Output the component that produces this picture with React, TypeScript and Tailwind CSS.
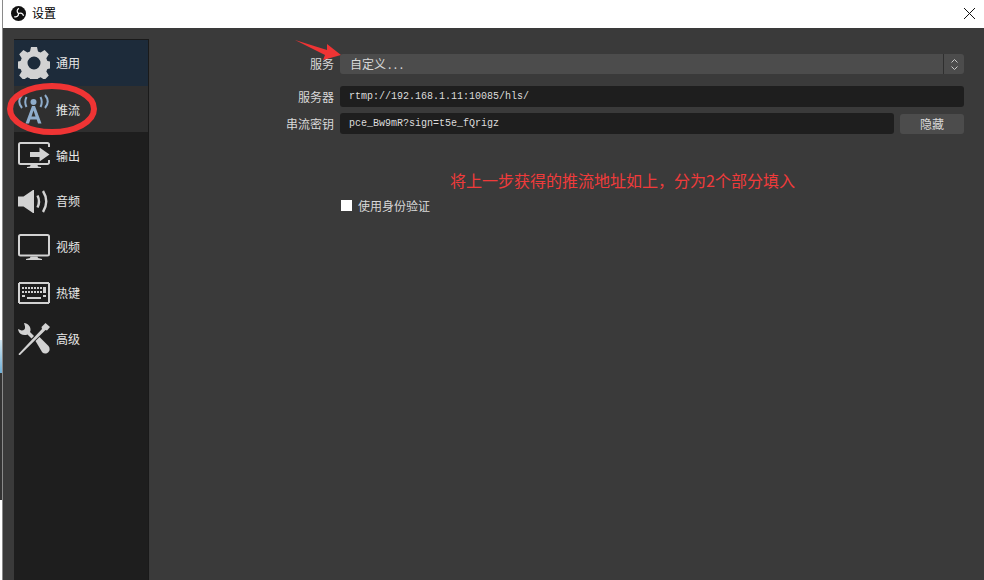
const cjk = '"Noto Sans CJK SC", "Liberation Sans", sans-serif';

function GearIcon() {
  return (
    <svg viewBox="0 0 32 32" className="h-[32px] w-[32px]">
      <path
        fill="#d2d2d2"
        fillRule="evenodd"
        d="M13 0h6l1 4.500 2.600 1.100 4-2.500 4.200 4.200-2.500 4 1.100 2.700 4.600 1v6l-4.600 1-1.100 2.600 2.500 4-4.200 4.200-4-2.500-2.600 1.100-1 4.600h-6l-1-4.600-2.600-1.100-4 2.500-4.200-4.200 2.500-4-1.100-2.600-4.600-1v-6l4.600-1 1.100-2.700-2.500-4 4.200-4.200 4 2.500L12 4.500zM16 9.500a6.500 6.500 0 1 0 0 13 6.500 6.500 0 0 0 0-13z"
      />
    </svg>
  );
}

function TowerIcon() {
  return (
    <svg viewBox="0 0 32 30" className="h-[30px] w-[32px]" fill="none">
      <circle cx="15.500" cy="8" r="3" fill="#8fadcc" />
      <path d="M8.500 3q-2.500 5 0 10M22.500 3q2.500 5 0 10" stroke="#8fadcc" strokeWidth="2" />
      <path d="M4 1q-5.500 6.500 0 13M27 1q5.500 6.500 0 13" stroke="#8fadcc" strokeWidth="2" />
      <path d="M14 12h3l6.500 17.500h-3.500l-1.300-4h-6.400l-1.300 4H7.500zM13.500 22.500h4l-2-6z" fill="#8fadcc" fillRule="evenodd" />
    </svg>
  );
}

function OutputIcon() {
  return (
    <svg viewBox="0 0 32 26" className="h-[26px] w-[32px]" fill="none">
      <path d="M31 5V2.500A1.500 1.500 0 0 0 29.500 1h-27A1.500 1.500 0 0 0 1 2.500v18A1.500 1.500 0 0 0 2.500 22h27a1.500 1.500 0 0 0 1.500-1.500V18" stroke="#d2d2d2" strokeWidth="2" />
      <path d="M12.500 23h7l.5 1.500 3 .5v1H9v-1l3-.5z" fill="#d2d2d2" />
      <path d="M12 10h9.500V5.500L31.500 12.500 21.500 19.500V15H12z" fill="#d2d2d2" />
    </svg>
  );
}

function SpeakerIcon() {
  return (
    <svg viewBox="0 0 31 23" className="h-[23px] w-[31px]" fill="none">
      <path d="M0 6.500h5.500L15 0h1v23h-1L5.500 16.500H0z" fill="#d2d2d2" />
      <path d="M19.500 5.500q3 6 0 12" stroke="#d2d2d2" strokeWidth="2.400" />
      <path d="M25 1q6.500 10.500 0 21" stroke="#d2d2d2" strokeWidth="2.400" />
    </svg>
  );
}

function MonitorIcon() {
  return (
    <svg viewBox="0 0 32 26" className="h-[26px] w-[32px]" fill="none">
      <rect x="1" y="1" width="30" height="20.500" rx="1.500" stroke="#d2d2d2" strokeWidth="2" />
      <path d="M12.500 22.500h7l.5 1.500 4 1v1H8v-1l4-1z" fill="#d2d2d2" />
    </svg>
  );
}

function KeyboardIcon() {
  const keys: string[] = [];
  for (let x = 4; x < 25; x += 3) {
    keys.push(`M${x} 5h2v2h-2z`);
    keys.push(`M${x} 9h2v2h-2z`);
  }
  return (
    <svg viewBox="0 0 32 22" className="h-[22px] w-[32px]" fill="none" shapeRendering="crispEdges">
      <rect x="1" y="1" width="30" height="20" rx="1.500" stroke="#d2d2d2" strokeWidth="2" />
      <path d={keys.join("")} fill="#d2d2d2" />
      <path d="M25 5h3v6h-3zM4 13h3v2H4zM25 13h3v2h-3zM9 15h14v2H9z" fill="#d2d2d2" />
    </svg>
  );
}

function ToolsIcon() {
  return (
    <svg viewBox="0 0 32 32" className="h-[32px] w-[32px]" fill="#d2d2d2">
      <path d="M6 0c4 .5 7 3.500 6.500 7.500l-.5 1.500 4 4-2.500 2.500-4-4C6 13 1.500 11.500.5 8L0 6l3.500 1.500c2.500 0 4-1.500 3.500-4z" />
      <path d="M27.500 0 32 4 29 7.500 27.500 7 2 32h-1L.500 31 24 6l-.500-2z" />
      <path d="m17.500 18 4-4 9 9c1.500 2 1.500 4.500 0 6-2 2-4.500 2-6.300.3z" />
    </svg>
  );
}

const navItems = [
  { label: "通用", icon: <GearIcon />, row: "h-[46px] bg-[#1d2b3a]", text: "" },
  { label: "推流", icon: <TowerIcon />, row: "h-[46px] bg-[#2f2f2f]", text: "pt-[1px]" },
  { label: "输出", icon: <OutputIcon />, row: "h-[46px]", text: "pt-[1px]" },
  { label: "音频", icon: <SpeakerIcon />, row: "h-[46px]", text: "" },
  { label: "视频", icon: <MonitorIcon />, row: "h-[46px]", text: "" },
  { label: "热键", icon: <KeyboardIcon />, row: "h-[46px]", text: "" },
  { label: "高级", icon: <ToolsIcon />, row: "h-[46px]", text: "" },
];

function FormLabel({ children }: { children: string }) {
  return <div className="w-[185px] shrink-0 text-right text-[12px] leading-none text-[#d8d8d8]">{children}</div>;
}

export default function App() {
  return (
    <div className="relative flex h-[580px] w-[984px] overflow-hidden bg-white" style={{ fontFamily: cjk }}>
      {/* bit of the desktop showing behind the window */}
      <div className="flex w-[2px] shrink-0 flex-col">
        <div className="h-[340px] bg-white" />
        <div className="h-[33px] bg-gradient-to-b from-[#d4e8f2] to-[#6fb0d8]" />
        <div className="h-[127px] bg-[#333333]" />
        <div className="flex-1 bg-white" />
      </div>

      <div className="flex min-w-0 flex-1 flex-col border-l border-[#8a8a8a] bg-[#3a3a3a]">
        <div className="flex h-[28px] shrink-0 items-center bg-white pb-[2px] pl-[8px] pr-[9px]">
          <svg viewBox="0 0 16 16" className="h-[15px] w-[15px]" fill="none">
            <circle cx="8" cy="8" r="8" fill="#111" />
            <path d="M8 8C6 6.500 6 3.500 8.500 2.500M8 8c2.300-1 5-.2 5.300 2.500M8 8c.3 2.500-2 4.300-4.500 3.300" stroke="#fff" strokeWidth="1.300" />
          </svg>
          <span className="ml-[6px] text-[12px] text-black">设置</span>
          <svg viewBox="0 0 11 11" className="ml-auto h-[11px] w-[11px]" stroke="#111" strokeWidth="1">
            <path d="M0 0l11 11M11 0L0 11" />
          </svg>
        </div>

        <div className="flex min-h-0 flex-1 items-start">
          <aside className="ml-[11px] mt-[11px] h-[541px] w-[135px] shrink-0 border-r border-t border-[#1a1a1a] bg-[#1e1e1e]">
            {navItems.map((item) => (
              <div key={item.label} className={`flex items-center ${item.row}`}>
                <div className="flex w-[38px] shrink-0 justify-center pl-[1px] text-[#d2d2d2]">{item.icon}</div>
                <span className={`ml-[4px] text-[12px] leading-none text-[#e6e6e6] ${item.text}`}>{item.label}</span>
              </div>
            ))}
          </aside>

          <main className="flex-1 pr-[20px] pt-[26px]">
            <div className="flex h-[20px] items-center">
              <FormLabel>服务</FormLabel>
              <div className="ml-[6px] flex h-full flex-1 items-center rounded-[3px] bg-[#4c4c4c]">
                <span className="flex-1 pl-[10px] text-[12px] leading-none text-[#d8d8d8]">
                  自定义<span className="pl-[2px] tracking-[2.500px]">...</span>
                </span>
                <div className="flex h-full w-[21px] flex-col items-center justify-center gap-[3px] border-l border-[#2f2f2f]">
                  <svg viewBox="0 0 7 4" className="h-[4px] w-[7px]" fill="none" stroke="#c8c8c8"><path d="M.5 3.500l3-3 3 3" /></svg>
                  <svg viewBox="0 0 7 4" className="h-[4px] w-[7px]" fill="none" stroke="#c8c8c8"><path d="M.5.500l3 3 3-3" /></svg>
                </div>
              </div>
            </div>

            <div className="mt-[12px] flex h-[21px] items-center">
              <FormLabel>服务器</FormLabel>
              <div className="ml-[6px] flex h-full flex-1 items-center rounded-[3px] bg-[#1e1e1e] pl-[9px] font-['Liberation_Mono',monospace] text-[10px] leading-none text-[#dcdcdc]">
                rtmp://192.168.1.11:10085/hls/
              </div>
            </div>

            <div className="mt-[6px] flex h-[21px] items-center">
              <FormLabel>串流密钥</FormLabel>
              <div className="ml-[6px] flex h-full flex-1 items-center rounded-[3px] bg-[#1e1e1e] pl-[9px] font-['Liberation_Mono',monospace] text-[10px] leading-none text-[#dcdcdc]">
                pce_Bw9mR?sign=t5e_fQrigz
              </div>
              <div className="ml-[6px] flex h-[20px] w-[64px] shrink-0 items-center justify-center rounded-[3px] bg-[#4c4c4c] text-[12px] leading-none text-[#d8d8d8]">
                隐藏
              </div>
            </div>

            <div className="mt-[65px] flex h-[13px] items-center pl-[192px]">
              <div className="h-[11px] w-[11px] bg-white" />
              <span className="ml-[6px] text-[12px] leading-none text-[#d8d8d8]">使用身份验证</span>
            </div>
          </main>
        </div>
      </div>

      {/* annotations pasted over the screenshot */}
      <div className="absolute left-[450px] top-[170px] text-[16px] leading-[20px] text-[#f03a3a]">
        将上一步获得的推流地址如上，分为2个部分填入
      </div>
      <svg className="absolute left-0 top-0 h-[580px] w-[984px]" viewBox="0 0 984 580" fill="none">
        <ellipse cx="52" cy="109" rx="42" ry="23" stroke="#ef3434" strokeWidth="6" />
        <path d="M295 40 L327 50 L327 44 L341 55 L323 60 L325 55z" fill="#ef3434" />
      </svg>
    </div>
  );
}
